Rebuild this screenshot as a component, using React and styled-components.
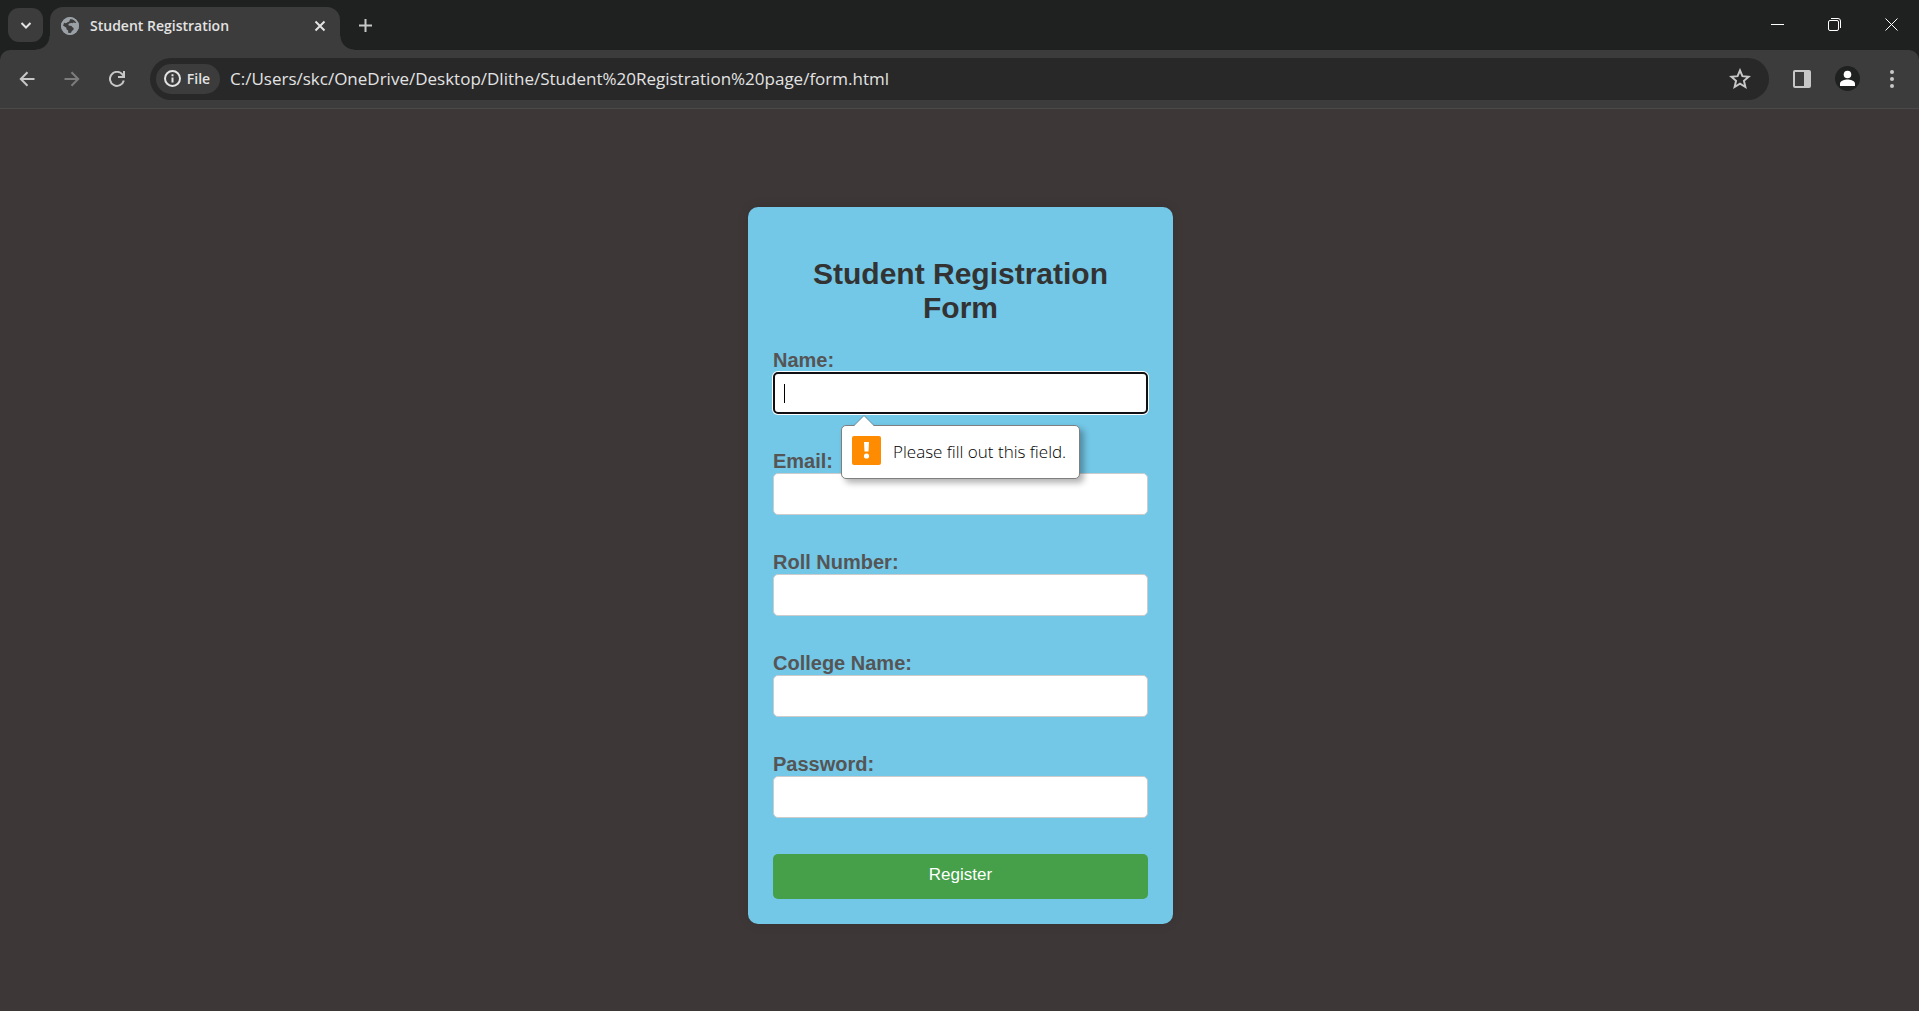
import React from "react";
import styled, { createGlobalStyle, css } from "styled-components";

const uiFont = `"Open Sans", "Noto Sans", sans-serif`;
const pageFont = `"Liberation Sans", Arial, sans-serif`;

const GlobalStyle = createGlobalStyle`
  *, *::before, *::after { box-sizing: border-box; }
  body { margin: 0; background: #3d3737; font-family: ${pageFont}; }
  button, input { font: inherit; margin: 0; }
  svg { flex: none; }
`;

const Browser = styled.div`
  display: flex;
  flex-direction: column;
  min-height: 100vh;
`;

const TabStrip = styled.header`
  display: flex;
  align-items: flex-start;
  height: 50px;
  padding-left: 8px;
  background: #1f2120;
`;

const PlainButton = styled.button`
  display: flex;
  align-items: center;
  justify-content: center;
  flex: none;
  padding: 0;
  border: 0;
  background: transparent;
  color: #c7c7c7;
`;

const TabSearch = styled(PlainButton)`
  width: 35px;
  height: 34px;
  margin: 8px 7px 0 0;
  border-radius: 11px;
  background: #3c3c3c;
  color: #e3e3e3;
`;

const Tab = styled.div`
  position: relative;
  display: flex;
  align-items: center;
  width: 290px;
  height: 43px;
  margin-top: 7px;
  padding: 0 11px 6px 11px;
  border-radius: 13px 13px 0 0;
  background: #3c3c3c;

  &::before,
  &::after {
    content: "";
    position: absolute;
    bottom: 0;
    width: 14px;
    height: 14px;
  }
  &::before {
    right: 100%;
    background: radial-gradient(circle at 0 0, transparent 13px, #3c3c3c 14px);
  }
  &::after {
    left: 100%;
    background: radial-gradient(circle at 100% 0, transparent 13px, #3c3c3c 14px);
  }
`;

const TabTitle = styled.span`
  flex: 1;
  margin-left: 11px;
  font: 600 14px/20px ${uiFont};
  color: #e3e3e3;
  white-space: nowrap;
`;

const TabButton = styled(PlainButton)`
  width: 18px;
  height: 18px;
  color: #e3e3e3;
`;

const NewTab = styled(PlainButton)`
  width: 35px;
  height: 35px;
  margin: 8px 0 0 8px;
`;

const WindowControls = styled.div`
  display: flex;
  margin-left: auto;
`;

const WindowButton = styled(PlainButton)`
  width: 57px;
  height: 49px;
  padding-left: 2px;
  color: #fff;
`;

const ToolbarBack = styled.div`
  background: #1f2120;
`;

const Toolbar = styled.nav`
  display: flex;
  align-items: center;
  gap: 11px;
  height: 59px;
  padding: 0 10px 1px;
  border-bottom: 1px solid #4a4a4a;
  border-radius: 10px 10px 0 0;
  background: #3c3c3c;
`;

const ToolButton = styled(PlainButton)`
  width: 34px;
  height: 34px;
  color: ${(p) => (p.disabled ? "#7c7c7c" : "#c7c7c7")};
`;

const Omnibox = styled.div`
  display: flex;
  flex: 1;
  align-items: center;
  height: 42px;
  margin: 0 5px;
  padding: 0 20px 0 6px;
  border-radius: 21px;
  background: #282828;
`;

const FileChip = styled(PlainButton)`
  gap: 6px;
  width: 64px;
  height: 30px;
  padding-right: 2px;
  border-radius: 15px;
  background: #3c3c3c;
  color: #e3e3e3;
  font: 600 14px/20px ${uiFont};
`;

const Address = styled.input`
  flex: 1;
  min-width: 0;
  height: 30px;
  padding: 0 0 0 10px;
  border: 0;
  outline: 0;
  background: transparent;
  color: #e3e3e3;
  font: 400 17px/30px ${uiFont};
`;

const Page = styled.main`
  display: flex;
  flex: 1;
  align-items: flex-start;
  justify-content: center;
  padding: 98px 20px 80px 22px;
`;

const Card = styled.form`
  width: 100%;
  max-width: 425px;
  padding: 25px;
  border-radius: 10px;
  background: #73c7e7;
  box-shadow: 0 0 12px rgba(0, 0, 0, 0.1);
`;

const Title = styled.h1`
  margin: 25px 0 24px;
  font-size: 30px;
  line-height: 34px;
  text-align: center;
  color: #333;
`;

const Field = styled.div`
  margin-bottom: 36px;
`;

const Label = styled.label`
  display: block;
  font-size: 20px;
  font-weight: 700;
  line-height: 23px;
  color: #555;
`;

const InputWrap = styled.div`
  position: relative;
`;

const TextInput = styled.input`
  display: block;
  width: 100%;
  height: 42px;
  padding: 10px;
  border: 1px solid #ccc;
  border-radius: 5px;
  outline: 0;
  background: #fff;
  font-size: 16px;
  ${(p) =>
    p.$active &&
    css`
      border: 2px solid #101014;
      box-shadow: 0 0 0 1px #fff;
    `}
`;

const Caret = styled.span`
  position: absolute;
  top: 12px;
  left: 11px;
  width: 1px;
  height: 19px;
  background: #000;
`;

const Bubble = styled.div`
  position: absolute;
  z-index: 1;
  top: 53px;
  left: 68px;
  display: flex;
  align-items: center;
  gap: 12px;
  height: 54px;
  padding: 0 13px 0 10px;
  border: 1px solid #7f7f7f;
  border-radius: 5px;
  background: #fff;
  box-shadow: 4px 4px 6px rgba(0, 0, 0, 0.3);
  color: #000;
  font: 300 17px/24px ${uiFont};
  white-space: nowrap;
`;

const BubbleArrow = styled.svg`
  position: absolute;
  top: -11px;
  left: 11px;
`;

const WarningIcon = styled.svg`
  margin-bottom: 4px;
`;

const Register = styled.button`
  display: block;
  width: 100%;
  height: 45px;
  padding: 0 0 4px;
  border: 0;
  border-radius: 5px;
  background: #45a049;
  color: #fff;
  font-size: 17px;
`;

const Stroke = ({ size, d, width = 2, box = size, ...rest }) => (
  <svg width={size} height={size} viewBox={`0 0 ${box} ${box}`} fill="none" stroke="currentColor" strokeWidth={width} aria-hidden="true" {...rest}>
    <path d={d} />
  </svg>
);

const Globe = () => (
  <svg width="18" height="18" viewBox="0 0 18 18" aria-hidden="true">
    <circle cx="9" cy="9" r="9" fill="#9aa0a6" />
    <path
      fill="#3c3c3c"
      d="M9.6 1.8 C12.4 1.9 14.8 3.4 15.9 5.8 L14.2 6 C13.2 5.2 12 5.3 11.4 6.2 C10.2 5.8 8.8 6 7.8 6.8 C7 7.6 7.4 8.6 8.6 8.8 C10 8.8 11 9.2 11.4 10.2 C12.4 10.4 13 11.2 12.6 12.4 C12 13.4 11 13.4 10.6 14.4 L10 16 C8.8 16.3 7.8 16.2 7 16 L7.2 13.4 C5.8 13.2 5.2 12 5.4 10.8 L2 8.4 C2.2 7.4 2.6 6.4 3 5.8 C4.2 6.4 5.6 6.2 6.4 5.2 C7.4 4.8 8.6 4.6 8.6 3.4 Z"
    />
    <circle cx="9" cy="9" r="8" fill="none" stroke="#9aa0a6" strokeWidth="1.8" />
  </svg>
);

const fields = [
  { id: "name", label: "Name:", type: "text" },
  { id: "email", label: "Email:", type: "email" },
  { id: "roll", label: "Roll Number:", type: "text" },
  { id: "college", label: "College Name:", type: "text" },
  { id: "password", label: "Password:", type: "password" },
];

const RequiredBubble = () => (
  <Bubble role="alert">
    <BubbleArrow width="22" height="12" viewBox="0 0 22 12" aria-hidden="true">
      <path d="M0 12 L11 1 L22 12 Z" fill="#fff" />
      <path d="M0.5 11 L11 0.5 L21.5 11" fill="none" stroke="#7f7f7f" strokeOpacity="0.7" />
    </BubbleArrow>
    <WarningIcon width="29" height="29" viewBox="0 0 29 29" aria-hidden="true">
      <rect width="29" height="29" rx="2" fill="#ff8c00" />
      <path d="M12 6 H17 L16.5 15.5 H12.5 Z" fill="#fff" />
      <circle cx="14.5" cy="20" r="2.6" fill="#fff" />
    </WarningIcon>
    Please fill out this field.
  </Bubble>
);

export default function App() {
  return (
    <Browser>
      <GlobalStyle />
      <TabStrip>
        <TabSearch type="button" aria-label="Search tabs">
          <Stroke size={12} d="M1.5 4 L6 8.5 L10.5 4" />
        </TabSearch>
        <Tab>
          <Globe />
          <TabTitle>Student Registration</TabTitle>
          <TabButton type="button" aria-label="Close tab">
            <Stroke size={12} d="M1.5 1.5 L10.5 10.5 M10.5 1.5 L1.5 10.5" />
          </TabButton>
        </Tab>
        <NewTab type="button" aria-label="New tab">
          <Stroke size={13} d="M6.5 0 V13 M0 6.5 H13" />
        </NewTab>
        <WindowControls>
          <WindowButton type="button" aria-label="Minimize">
            <Stroke size={13} width={1} d="M0 6.5 H13" />
          </WindowButton>
          <WindowButton type="button" aria-label="Restore">
            <Stroke size={13} width={1} d="M2 2.5 H9 Q10.5 2.5 10.5 4 V11 Q10.5 12.5 9 12.5 H2 Q0.5 12.5 0.5 11 V4 Q0.5 2.5 2 2.5 Z M3 0.5 H10 Q12.5 0.5 12.5 3 V10" />
          </WindowButton>
          <WindowButton type="button" aria-label="Close window">
            <Stroke size={13} width={1} d="M0.5 0.5 L12.5 12.5 M12.5 0.5 L0.5 12.5" />
          </WindowButton>
        </WindowControls>
      </TabStrip>

      <ToolbarBack>
        <Toolbar>
          <ToolButton type="button" aria-label="Back">
            <Stroke size={16} d="M15.5 8 H2 M8.5 1.2 L1.8 8 L8.5 14.8" />
          </ToolButton>
          <ToolButton type="button" aria-label="Forward" disabled>
            <Stroke size={16} d="M0.5 8 H14 M7.5 1.2 L14.2 8 L7.5 14.8" />
          </ToolButton>
          <ToolButton type="button" aria-label="Reload">
            <Stroke size={16} d="M14.8 9.5 A7 7 0 1 1 13.4 3.4 L14.5 4.8 M15 0 V6 H9" />
          </ToolButton>
          <Omnibox>
            <FileChip type="button">
              <svg width="17" height="17" viewBox="0 0 17 17" fill="none" stroke="currentColor" strokeWidth="2" aria-hidden="true">
                <circle cx="8.5" cy="8.5" r="7.5" />
                <path d="M8.5 7.5 V12.5 M8.5 4.3 V6.2" />
              </svg>
              File
            </FileChip>
            <Address
              aria-label="Address"
              readOnly
              value="C:/Users/skc/OneDrive/Desktop/Dlithe/Student%20Registration%20page/form.html"
            />
            <TabButton type="button" aria-label="Bookmark this page">
              <svg width="22" height="22" viewBox="0 0 20 20" fill="none" stroke="#c7c7c7" strokeWidth="1.8" aria-hidden="true">
                <path d="M10 2.2 L12.2 7.4 L17.9 7.9 L13.6 11.7 L14.9 17.3 L10 14.3 L5.1 17.3 L6.4 11.7 L2.1 7.9 L7.8 7.4 Z" />
              </svg>
            </TabButton>
          </Omnibox>
          <ToolButton type="button" aria-label="Side panel">
            <svg width="18" height="18" viewBox="0 0 18 18" aria-hidden="true">
              <rect x="1" y="1" width="16" height="16" rx="1" fill="none" stroke="currentColor" strokeWidth="2" />
              <path d="M11 1 H17 V17 H11 Z" fill="currentColor" />
            </svg>
          </ToolButton>
          <ToolButton type="button" aria-label="Profile">
            <svg width="25" height="25" viewBox="0 0 25 25" aria-hidden="true">
              <circle cx="12.5" cy="12.5" r="12.5" fill="#1f2120" />
              <circle cx="12.5" cy="8.5" r="3.8" fill="#fff" />
              <path d="M5 20 V17.6 C5 14.8 10 13.6 12.5 13.6 C15 13.6 20 14.8 20 17.6 V20 Z" fill="#fff" />
            </svg>
          </ToolButton>
          <ToolButton type="button" aria-label="Menu">
            <svg width="4" height="18" viewBox="0 0 4 18" fill="currentColor" aria-hidden="true">
              <circle cx="2" cy="2" r="2" />
              <circle cx="2" cy="9" r="2" />
              <circle cx="2" cy="16" r="2" />
            </svg>
          </ToolButton>
        </Toolbar>
      </ToolbarBack>

      <Page>
        <Card noValidate onSubmit={(e) => e.preventDefault()}>
          <Title>Student Registration Form</Title>
          {fields.map((f, i) => (
            <Field key={f.id}>
              <Label htmlFor={f.id}>{f.label}</Label>
              <InputWrap>
                <TextInput id={f.id} name={f.id} type={f.type} required $active={i === 0} />
                {i === 0 && <Caret />}
                {i === 0 && <RequiredBubble />}
              </InputWrap>
            </Field>
          ))}
          <Register type="submit">Register</Register>
        </Card>
      </Page>
    </Browser>
  );
}
